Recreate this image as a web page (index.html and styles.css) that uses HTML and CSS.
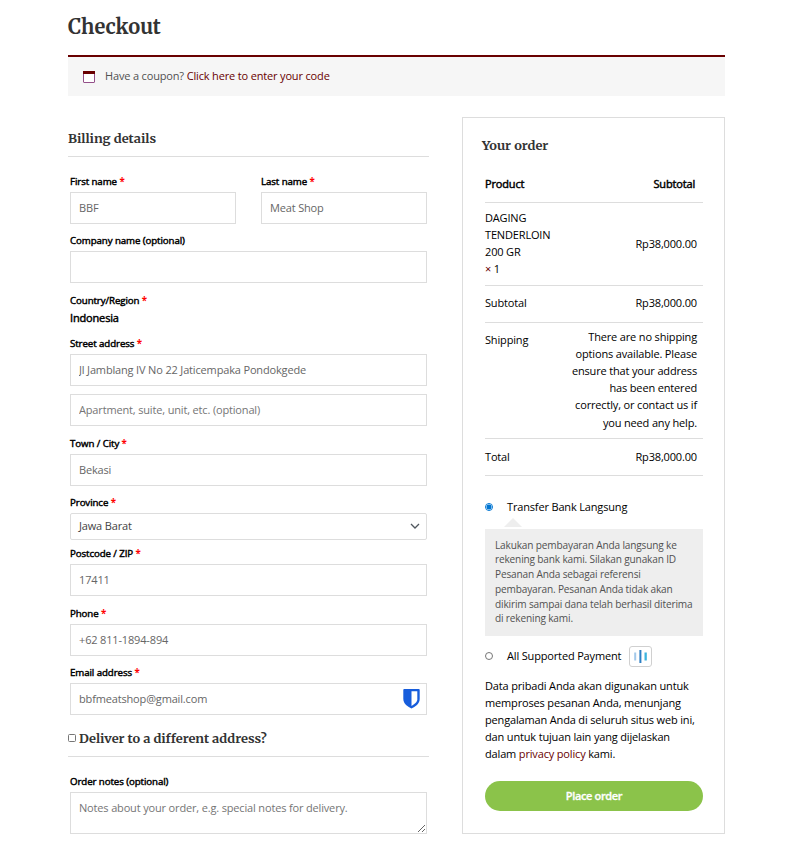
FILE: index.html
```
<!DOCTYPE html>
<html lang="id">
<head>
    <meta charset="UTF-8">
    <title>Checkout</title>
    <meta name="viewport" content="width=device-width, initial-scale=1">
    <link rel="stylesheet" href="styles.css">
</head>
<body>
    <main class="checkout">
        <h1>Checkout</h1>
        <div class="coupon">
            <svg class="coupon-icon" width="12" height="12" viewBox="0 0 12 12">
                <rect x="0.5" y="0.5" width="11" height="11" rx="0.5" fill="#fff" stroke="#94508a"/>
                <rect width="12" height="3" fill="#690000"/>
            </svg>
            <span>Have a coupon? <a href="#">Click here to enter your code</a></span>
        </div>

        <form class="columns" autocomplete="off">
            <div class="billing">
                <h3>Billing details</h3>
                <div class="fields">
                    <div class="field-row">
                        <div class="field">
                            <label for="first_name">First name <b class="required">*</b></label>
                            <input type="text" id="first_name" value="BBF">
                        </div>
                        <div class="field">
                            <label for="last_name">Last name <b class="required">*</b></label>
                            <input type="text" id="last_name" value="Meat Shop">
                        </div>
                    </div>
                    <div class="field">
                        <label for="company">Company name (optional)</label>
                        <input type="text" id="company">
                    </div>
                    <div class="field">
                        <label>Country/Region <b class="required">*</b></label>
                        <strong class="country">Indonesia</strong>
                    </div>
                    <div class="field">
                        <label for="address_1">Street address <b class="required">*</b></label>
                        <input type="text" id="address_1" value="Jl Jamblang IV No 22 Jaticempaka Pondokgede">
                        <input type="text" id="address_2" class="address-2" placeholder="Apartment, suite, unit, etc. (optional)">
                    </div>
                    <div class="field">
                        <label for="city">Town / City <b class="required">*</b></label>
                        <input type="text" id="city" value="Bekasi">
                    </div>
                    <div class="field field-select">
                        <label for="province">Province <b class="required">*</b></label>
                        <div class="select" id="province">
                            <span>Jawa Barat</span>
                            <svg width="10" height="6" viewBox="0 0 10 6"><path d="M1 1l4 4 4-4" fill="none" stroke="#50575e" stroke-width="1.3"/></svg>
                        </div>
                    </div>
                    <div class="field">
                        <label for="postcode">Postcode / ZIP <b class="required">*</b></label>
                        <input type="text" id="postcode" value="17411">
                    </div>
                    <div class="field">
                        <label for="phone">Phone <b class="required">*</b></label>
                        <input type="tel" id="phone" value="+62 811-1894-894">
                    </div>
                    <div class="field">
                        <label for="email">Email address <b class="required">*</b></label>
                        <div class="email-box">
                            <input type="email" id="email" value="bbfmeatshop@gmail.com">
                            <svg class="shield" width="17" height="20" viewBox="0 0 17 20">
                                <path d="M1.2 0h14.6q.9 0 .9.9V10c0 5-4.700 7.700-8.200 9.500C5 17.700.3 15 .3 10V.9q0-.9.9-.9z" fill="#175ddc"/>
                                <path d="M8.500 2.300h5.800v8c0 3-2.900 5-5.800 6.700z" fill="#fff"/>
                            </svg>
                        </div>
                    </div>
                </div>

                <h3 class="deliver"><input type="checkbox" class="check"><span>Deliver to a different address?</span></h3>
                <div class="fields notes">
                    <div class="field">
                        <label for="notes">Order notes (optional)</label>
                        <textarea id="notes" placeholder="Notes about your order, e.g. special notes for delivery."></textarea>
                    </div>
                </div>
            </div>

            <div class="order">
                <h3>Your order</h3>
                <div class="order-table">
                    <div class="row row-head"><span>Product</span><span>Subtotal</span></div>
                    <div class="row row-item">
                        <span>DAGING<br>TENDERLOIN<br>200 GR<br><span class="times">×</span> 1</span>
                        <span>Rp38,000.00</span>
                    </div>
                    <div class="row row-subtotal"><span>Subtotal</span><span>Rp38,000.00</span></div>
                    <div class="row row-shipping">
                        <span>Shipping</span>
                        <span>There are no shipping<br>options available. Please<br>ensure that your address<br>has been entered<br>correctly, or contact us if<br>you need any help.</span>
                    </div>
                    <div class="row row-total"><span>Total</span><span>Rp38,000.00</span></div>
                </div>

                <label class="method">
                    <input type="radio" name="payment" class="radio" checked>
                    <span>Transfer Bank Langsung</span>
                </label>
                <div class="payment-box">Lakukan pembayaran Anda langsung ke<br>rekening bank kami. Silakan gunakan ID<br>Pesanan Anda sebagai referensi<br>pembayaran. Pesanan Anda tidak akan<br>dikirim sampai dana telah berhasil diterima<br>di rekening kami.</div>
                <label class="method method-other">
                    <input type="radio" name="payment" class="radio">
                    <span>All Supported Payment</span>
                    <svg class="pay-logo" width="23" height="21" viewBox="0 0 23 21">
                        <rect x="0.5" y="0.5" width="22" height="20" rx="2.5" fill="#fff" stroke="#d0d0d0"/>
                        <rect x="5.200" y="6.500" width="2" height="8" fill="#a3c9ea"/>
                        <rect x="10.400" y="4" width="2" height="13" fill="#2e7fc4"/>
                        <rect x="15.500" y="6.500" width="2.300" height="8" fill="#3cb4de"/>
                    </svg>
                </label>

                <p class="privacy">Data pribadi Anda akan digunakan untuk<br>memproses pesanan Anda, menunjang<br>pengalaman Anda di seluruh situs web ini,<br>dan untuk tujuan lain yang dijelaskan<br>dalam <a href="#">privacy policy</a> kami.</p>
                <button type="button" class="btn">Place order</button>
            </div>
        </form>
    </main>
</body>
</html>
```
FILE: styles.css
```
* {
    box-sizing: border-box;
}
body {
    background: #fff;
    font-family: 'Open Sans', 'Noto Sans', sans-serif;
    font-size: 11px;
    line-height: 17.1px;
    letter-spacing: -0.16px;
    margin: 0;
    color: #000;
}
.checkout {
    width: 657px;
    margin-left: 68px;
    padding-top: 12px;
}
h1, h3 {
    font-family: Merriweather, 'DejaVu Serif Condensed', 'DejaVu Serif', serif;
    font-stretch: condensed;
    font-weight: 700;
    letter-spacing: 0;
    color: #333;
    margin: 0;
}
h1 {
    font-size: 20px;
    line-height: 30px;
}
h3 {
    font-size: 12.85px;
    line-height: 22px;
}
a {
    color: #690000;
    text-decoration: none;
}
.coupon {
    display: flex;
    align-items: center;
    gap: 10px;
    height: 41px;
    margin-top: 13px;
    padding-left: 15px;
    border-top: 2px solid #690000;
    background: #f6f6f6;
    color: #515151;
}
.coupon span {
    padding-bottom: 2px;
}
.columns {
    display: flex;
    justify-content: space-between;
    margin-top: 21px;
}
.billing {
    width: 361px;
    padding-top: 11px;
}
.billing h3 {
    height: 29px;
    border-bottom: 1px solid #ddd;
}
.fields {
    display: flex;
    flex-direction: column;
    gap: 8.5px;
    padding: 15.7px 2px 0;
}
.field-row {
    display: grid;
    grid-template-columns: 166px 166px;
    justify-content: space-between;
}
.field {
    display: flex;
    flex-direction: column;
}
.field label {
    height: 19px;
    line-height: 18.6px;
    font-size: 9.7px;
    letter-spacing: -0.08px;
}
/* regular width, drawn heavier */
.field label, .country, .row-head {
    font-weight: 400;
    -webkit-text-stroke: 0.45px currentColor;
}
.required {
    color: #f00;
    font-weight: 700;
    -webkit-text-stroke: 0;
}
.field input, .select, textarea {
    width: 100%;
    height: 32px;
    padding: 0 8px 1px;
    border: 1px solid #ddd;
    border-radius: 0;
    background: #fff;
    font-family: inherit;
    font-size: 11px;
    letter-spacing: -0.16px;
    color: #666;
}
.field input::placeholder, textarea::placeholder {
    color: #757575;
    opacity: 1;
}
.field .address-2 {
    margin-top: 8px;
}
.country {
    height: 17px;
    margin-top: -1px;
    line-height: 16px;
}
.field-select {
    margin-bottom: -3.5px;
}
.field .select {
    display: flex;
    align-items: center;
    justify-content: space-between;
    height: 27px;
    padding-right: 6px;
    border-radius: 2px;
    color: #444;
}
.select span {
    padding-bottom: 1px;
}
.email-box {
    position: relative;
    display: flex;
}
.shield {
    position: absolute;
    right: 7px;
    top: 6px;
}
.billing .deliver {
    display: flex;
    gap: 3px;
    margin-top: 13px;
}
.check {
    appearance: none;
    width: 8px;
    height: 8px;
    margin: 6px 0 0;
    border: 1px solid #767676;
    border-radius: 1.5px;
}
.notes {
    padding-top: 15.3px;
}
.notes label {
    height: 19.7px;
    line-height: 19.4px;
}
textarea {
    display: block;
    height: 42px;
    padding-top: 6px;
    line-height: 17px;
}
.order {
    width: 263px;
    height: 717px;
    padding: 17px 21px 0 22px;
    border: 1px solid #ddd;
}
.order h3 {
    height: 20px;
    margin-left: -3px;
}
.row {
    display: flex;
    justify-content: space-between;
    align-items: center;
    padding-right: 6px;
    border-bottom: 1px solid #ddd;
}
.row span:last-child {
    text-align: right;
}
.row .times {
    color: #690000;
}
.row-head {
    height: 48px;
    padding: 10px 8px 0 0;
}
.row-item {
    height: 83px;
}
.row-item > span:first-child {
    padding-bottom: 2px;
    text-align: left;
}
.row-subtotal, .row-total {
    height: 37px;
}
.row-subtotal {
    padding-bottom: 2px;
}
.row-shipping {
    height: 116px;
    padding-top: 5.1px;
    align-items: flex-start;
}
.row-shipping > span:first-child {
    padding-top: 2.9px;
}
.method {
    display: flex;
    align-items: center;
    height: 20px;
    margin-top: 21px;
}
.radio {
    appearance: none;
    width: 8px;
    height: 8px;
    margin: 0 14px 0 0;
    border: 1px solid #767676;
    border-radius: 50%;
}
.radio:checked {
    border-color: #0075d2;
    background: radial-gradient(circle, #0075d2 2.2px, #fff 2.8px);
}
.payment-box {
    position: relative;
    height: 107px;
    margin-top: 12px;
    padding: 8.6px 0 0 10px;
    background: #eee;
    color: #515151;
    font-size: 10.1px;
    line-height: 14.75px;
    white-space: nowrap;
}
/* little arrow pointing at the chosen method */
.payment-box::before {
    content: '';
    position: absolute;
    left: 19px;
    top: -11px;
    border: 9px solid transparent;
    border-top: 0;
    border-bottom-color: #eee;
}
.method-other {
    margin-top: 10px;
}
.pay-logo {
    margin-left: 8px;
}
.privacy {
    margin: 11.1px 0 0;
    white-space: nowrap;
}
.btn {
    display: block;
    width: 100%;
    height: 30px;
    margin-top: 18.4px;
    border: none;
    border-radius: 15px;
    background: #8bc34a;
    color: #fff;
    font-family: inherit;
    font-size: 11px;
    font-weight: 600;
    letter-spacing: -0.35px;
    -webkit-text-stroke: 0.3px #fff;
    cursor: pointer;
}
```
